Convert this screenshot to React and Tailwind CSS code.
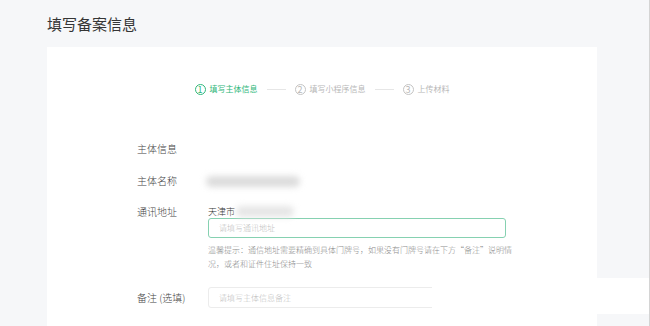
import React from 'react';

const font = { fontFamily: '"Noto Sans CJK SC", "Noto Sans", sans-serif' };

const Step = ({ n, label, active }) => (
    <div className={`flex items-center gap-[4px] ${active ? 'text-[#2fb77a]' : 'text-[#b8b8b8]'}`}>
        <span
            className={`w-[11px] h-[11px] rounded-full border flex items-center justify-center text-[9px] leading-none ${active ? 'border-[#2fb77a]' : 'border-[#c4c4c4]'}`}
        >
            {n}
        </span>
        <span className="text-[8px] leading-[12px]">{label}</span>
    </div>
);

const Line = () => <div className="w-[19px] h-px bg-[#e6e6e6] mx-[9px]" />;

const Blur = ({ w, className = '' }) => (
    <div className={`h-[11px] rounded-full bg-[#dcdcdc] blur-[3px] ${className}`} style={{ width: w }} />
);

export default function App() {
    return (
        <div
            className="relative w-[650px] h-[326px] overflow-hidden bg-[#f6f7f9] border-r border-[#d4d4d4] flex flex-col pl-[47px]"
            style={font}
        >
            <h1 className="pt-[14px] text-[15px] leading-[20px] text-[#353535]">填写备案信息</h1>

            <div className="mt-[13px] w-[550px] flex-1 bg-white">
                {/* steps */}
                <div className="pt-[36px] flex items-center justify-center">
                    <Step n="1" label="填写主体信息" active />
                    <Line />
                    <Step n="2" label="填写小程序信息" />
                    <Line />
                    <Step n="3" label="上传材料" />
                </div>

                {/* form */}
                <div className="ml-[90px] text-[10px] text-[#444] font-light">
                    <div className="mt-[47px] leading-[14px]">主体信息</div>

                    <div className="mt-[18px] flex">
                        <div className="w-[71px] leading-[14px]">主体名称</div>
                        <div className="flex items-center">
                            <Blur w={94} className="ml-[-2px]" />
                        </div>
                    </div>

                    <div className="mt-[17px] flex">
                        <div className="w-[71px] leading-[13px]">通讯地址</div>
                        <div className="w-[298px]">
                            <div className="flex items-center h-[13px]">
                                <span className="text-[9px] leading-[13px] text-[#333]">天津市</span>
                                <Blur w={58} className="ml-[1px] bg-[#e6e6e6]" />
                            </div>
                            <div className="h-[20px] rounded-[3px] border border-[#86d1b1] flex items-center px-[10px] text-[8px] text-[#c0c0c0]">
                                请填写通讯地址
                            </div>
                            <div className="mt-[5px] text-[8px] leading-[14px] text-[#8c8c8c] whitespace-nowrap">
                                温馨提示：通信地址需要精确到具体门牌号，如果没有门牌号请在下方“备注”说明情
                                <br />
                                况，或者和证件住址保持一致
                            </div>
                        </div>
                    </div>

                    <div className="mt-[16px] flex items-center">
                        <div className="w-[71px] leading-[14px]">备注 (选填)</div>
                        <div className="w-[298px] h-[21px] rounded-[3px] border border-[#ececec] flex items-center px-[10px] text-[8px] text-[#c0c0c0]">
                            请填写主体信息备注
                        </div>
                    </div>
                </div>
            </div>

            {/* white patch over the lower right */}
            <div className="absolute left-[432px] top-[278px] w-[217px] h-[36px] bg-white" />
        </div>
    );
}
